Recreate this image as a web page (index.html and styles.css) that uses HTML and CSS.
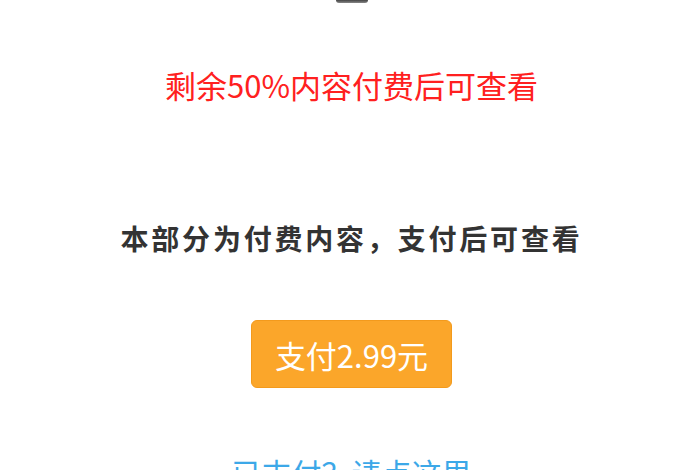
FILE: index.html
```html
<!DOCTYPE html>
<html lang="zh-CN">
<head>
<meta charset="utf-8">
<title>付费内容</title>
<link rel="stylesheet" href="styles.css">
</head>
<body>
<div class="paywall">
  <div class="lock-base"></div>
  <p class="remain">剩余50%内容付费后可查看</p>
  <p class="notice">本部分为付费内容，支付后可查看</p>
  <a class="pay-btn" href="#">支付2.99元</a>
  <a class="paid-link" href="#">已支付？请点这里</a>
</div>
</body>
</html>
```
FILE: styles.css
```css
html, body {
  margin: 0;
  padding: 0;
  background: #ffffff;
  overflow: hidden;
}

.paywall {
  display: flex;
  flex-direction: column;
  align-items: center;
  padding-left: 3px;
  font-family: "Noto Sans CJK SC", "Noto Sans", sans-serif;
}

/* bottom edge of the lock icon sitting above the fold */
.lock-base {
  width: 32px;
  height: 3px;
  background: linear-gradient(#444, #888);
  border-radius: 0 0 3px 3px;
}

.remain {
  margin: 64px 0 0;
  font-size: 31px;
  line-height: 36px;
  color: #ff2020;
}

.notice {
  margin: 117px 0 0;
  font-size: 28px;
  line-height: 36px;
  font-weight: bold;
  color: #333333;
  letter-spacing: 2.8px;
}

.pay-btn {
  margin-top: 64px;
  display: flex;
  align-items: center;
  justify-content: center;
  box-sizing: border-box;
  width: 201px;
  height: 68px;
  background: #fba62a;
  border: 1px solid #f39a1c;
  border-radius: 6px;
  color: #ffffff;
  font-size: 31px;
  text-decoration: none;
}

.paid-link {
  margin-top: 66px;
  font-size: 30px;
  line-height: 36px;
  color: #3ca8e8;
  text-decoration: none;
}
```
